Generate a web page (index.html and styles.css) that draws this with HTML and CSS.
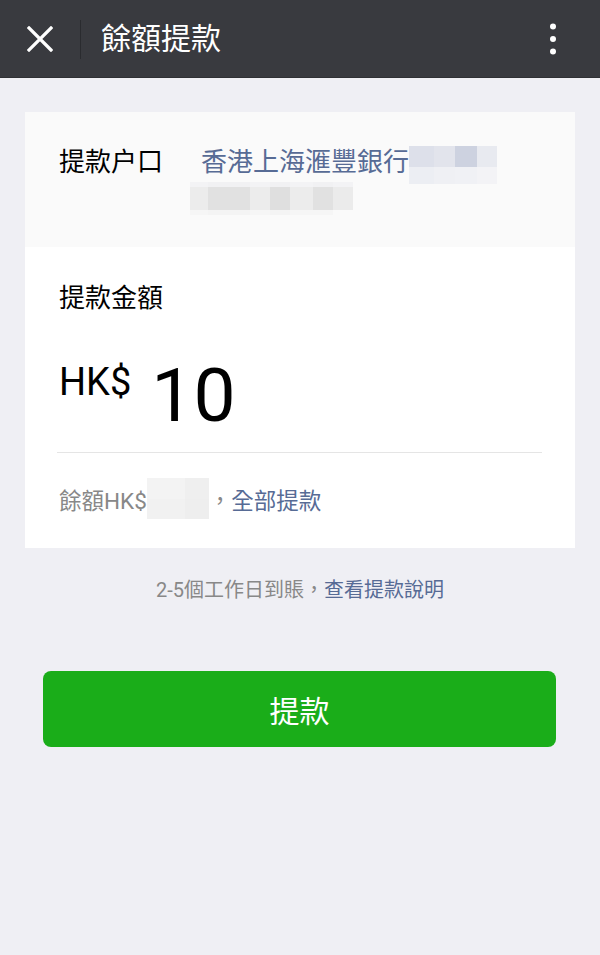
FILE: index.html
```html
<!DOCTYPE html>
<html lang="zh-Hant">
<head>
<meta charset="utf-8">
<title>餘額提款</title>
<link rel="stylesheet" href="styles.css">
</head>
<body>
<header class="topbar">
  <svg class="close-icon" width="26" height="26" viewBox="0 0 26 26" aria-hidden="true">
    <path d="M2 2 L24 24 M24 2 L2 24" stroke="#ffffff" stroke-width="3.2" stroke-linecap="square" fill="none"/>
  </svg>
  <div class="topbar-divider"></div>
  <h1 class="topbar-title">餘額提款</h1>
  <svg class="more-icon" width="8" height="32" viewBox="0 0 8 32" aria-hidden="true">
    <circle cx="4" cy="3.5" r="3" fill="#ffffff"/>
    <circle cx="4" cy="16" r="3" fill="#ffffff"/>
    <circle cx="4" cy="28.5" r="3" fill="#ffffff"/>
  </svg>
</header>

<main class="content">
  <section class="card">
    <div class="account">
      <div class="account-label">提款户口</div>
      <div class="account-value">
        <div class="bank-line">
          <span class="bank-name">香港上海滙豐銀行</span>
          <span class="blur blur-bank">
            <span class="bb bb1"></span><span class="bb bb2"></span><span class="bb bb3"></span><span class="bb bb4"></span>
          </span>
        </div>
        <div class="blur blur-acct">
          <span class="ba ba1"></span><span class="ba ba2"></span><span class="ba ba3"></span><span class="ba ba4"></span><span class="ba ba5"></span><span class="ba ba6"></span><span class="ba ba7"></span>
        </div>
      </div>
    </div>
    <div class="amount">
      <div class="amount-label">提款金額</div>
      <div class="amount-row">
        <span class="currency">HK$</span>
        <span class="amount-value">10</span>
      </div>
      <div class="balance">
        <span class="balance-text">餘額HK$</span><span class="blur blur-balance"><span class="bl bl1"></span><span class="bl bl2"></span></span><span class="balance-text">，</span><a class="link">全部提款</a>
      </div>
    </div>
  </section>

  <p class="note">2-5個工作日到賬，<a class="link">查看提款說明</a></p>

  <button class="submit">提款</button>
</main>
</body>
</html>
```

FILE: styles.css
```css
* { box-sizing: border-box; }
html, body {
  margin: 0;
  padding: 0;
}
body {
  width: 600px;
  min-height: 955px;
  background: #efeff4;
  font-family: Roboto, "Noto Sans CJK TC", "Noto Sans CJK SC", sans-serif;
  color: #000;
}

.topbar {
  height: 78px;
  background: #393a3f;
  display: flex;
  align-items: center;
  padding-left: 27px;
  padding-right: 43px;
  border-bottom: 1px solid #2f3034;
}
.close-icon { flex: none; margin-top: 1px; }
.topbar-divider {
  width: 1px;
  height: 39px;
  background: #2a2b2f;
  margin-left: 27px;
  margin-right: 20px;
  margin-top: 1px;
}
.topbar-title {
  margin: 0;
  flex: 1;
  font-size: 30px;
  font-weight: 400;
  color: #ffffff;
  line-height: 40px;
}
.more-icon { flex: none; margin-top: 1px; }

.content {
  padding-top: 34px;
}

.card {
  margin: 0 25px;
  background: #ffffff;
}

.account {
  height: 135px;
  background: #fafafa;
  display: flex;
  padding: 30px 0 0 34px;
}
.account-label {
  width: 131px;
  font-size: 26px;
  line-height: 40px;
}
.account-value { flex: 1; }
.bank-line {
  display: flex;
  align-items: flex-start;
}
.bank-name {
  padding-left: 11px;
  font-size: 26px;
  line-height: 40px;
  color: #576b95;
}
.blur { display: flex; }
.blur-bank {
  flex-direction: row;
  margin-top: 4px;
  height: 38px;
}
.bb { display: block; width: 22px; height: 38px; }
.bb1 { width: 25px; background: linear-gradient(#dde0ea 0 55%, #eceef3 55%); }
.bb2 { width: 21px; background: linear-gradient(#e2e4ec 0 55%, #eff0f4 55%); }
.bb3 { width: 22px; background: linear-gradient(#cdd2e0 0 55%, #f0f1f5 55%); }
.bb4 { width: 20px; background: linear-gradient(#e8eaf0 0 55%, #f3f3f6 55%); }

.blur-acct {
  height: 33px;
  margin-top: -2px;
}
.ba { display: block; height: 33px; background: linear-gradient(#f3f3f5 0 16%, #ececec 16% 86%, #f6f6f6 86%); }
.ba1 { width: 18px; }
.ba2 { width: 42px; background: linear-gradient(#f1f1f3 0 16%, #e1e1e1 16% 86%, #f4f4f4 86%); }
.ba3 { width: 20px; }
.ba4 { width: 20px; background: linear-gradient(#f1f1f3 0 16%, #dfdfdf 16% 86%, #f4f4f4 86%); }
.ba5 { width: 23px; }
.ba6 { width: 20px; background: linear-gradient(#f1f1f3 0 16%, #e1e1e1 16% 86%, #f6f6f6 86%); }
.ba7 { width: 20px; background: linear-gradient(#f3f3f5 0 16%, #ebebeb 16% 86%, #fafafa 86%); }

.amount {
  padding: 31px 33px 29px 34px;
}
.amount-label {
  font-size: 26px;
  line-height: 40px;
}
.amount-row {
  display: flex;
  align-items: flex-start;
  margin-top: 40px;
  padding-bottom: 19px;
  border-bottom: 1px solid #e5e5e5;
  margin-left: -2px;
  padding-left: 2px;
}
.currency {
  font-size: 38px;
  line-height: 38px;
  margin-top: 5px;
}
.amount-value {
  font-size: 75px;
  line-height: 75px;
  margin-left: 20px;
}
.balance {
  display: flex;
  align-items: center;
  height: 41px;
  margin-top: 25px;
  font-size: 22.5px;
}
.balance-text { color: #888888; }
.blur-balance { height: 41px; }
.bl { display: block; height: 41px; }
.bl1 { width: 38px; background: linear-gradient(#f3f3f3 0 50%, #f1f1f1 50%); }
.bl2 { width: 24px; background: linear-gradient(#efefef 0 50%, #eeeeee 50%); }
.link {
  color: #576b95;
  text-decoration: none;
}

.note {
  margin: 26px 0 0;
  text-align: center;
  font-size: 20px;
  line-height: 32px;
  color: #888888;
}

.submit {
  display: block;
  width: 513px;
  height: 76px;
  margin: 65px 0 0 43px;
  border: none;
  border-radius: 8px;
  background: #1aad19;
  color: #ffffff;
  font-family: Roboto, "Noto Sans CJK TC", "Noto Sans CJK SC", sans-serif;
  font-size: 30px;
  padding: 0;
}
```
